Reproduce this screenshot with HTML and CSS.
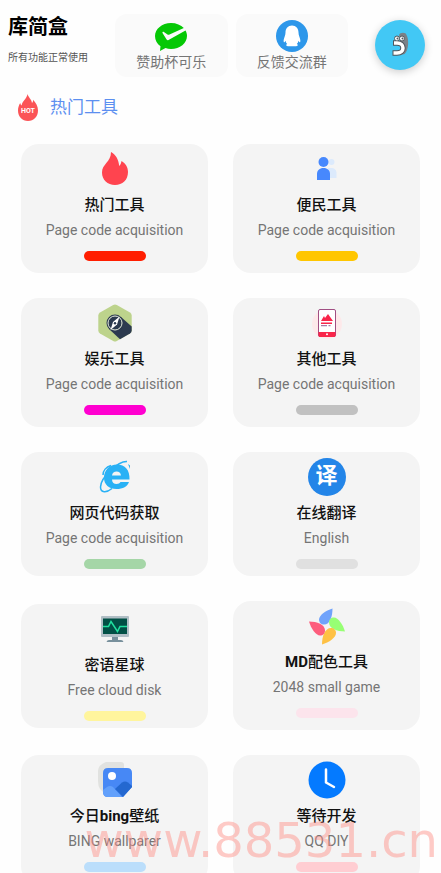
FILE: index.html
```html
<!DOCTYPE html>
<html lang="zh">
<head>
  <meta charset="UTF-8">
  <meta name="viewport" content="width=device-width, initial-scale=1">
  <title>库简盒</title>
  <link rel="stylesheet" href="styles.css">
</head>
<body>
  <header class="top">
    <div class="brand">
      <h1>库简盒</h1>
      <p>所有功能正常使用</p>
    </div>
    <div class="actions">
      <button type="button" class="action">
        <svg width="32" height="32" viewBox="0 0 32 32">
          <path fill="#05c805" d="M16 3C7 3 0 9 0 16c0 4 2 8 5.500 10.300L5 31l5.500-3C12.200 28.600 14 29 16 29c9 0 16-6 16-13 0-2-.5-3.800-1.500-5.500L13.500 20c-.8.400-1.500.2-1.900-.6L7.500 13c-.3-.8.700-1.500 1.400-1l3.600 2.600c.5.300 1 .3 1.500.1L28.800 8C26 5 21.400 3 16 3z"/>
        </svg>
        <span>赞助杯可乐</span>
      </button>
      <button type="button" class="action">
        <svg width="32" height="32" viewBox="0 0 32 32">
          <circle cx="16" cy="16" r="16" fill="#2d97ea"/>
          <path fill="#fff" d="M16 5.500c-4 0-6.500 3-6.500 7 0 1.500-.3 2.500-.8 4-.9 2.200-1.400 4.500-.9 5.600.5.600 1.300-.3 1.700-1.400.3 1.400.9 2.500 1.700 3.400-1.500.6-1.500 2.100.6 2.100h8.400c2.100 0 2.100-1.500.6-2.100.8-.9 1.400-2 1.700-3.400.4 1.100 1.200 2 1.700 1.400.5-1.100 0-3.400-.9-5.600-.5-1.500-.8-2.500-.8-4 0-4-2.500-7-6.500-7z"/>
        </svg>
        <span>反馈交流群</span>
      </button>
    </div>
    <button type="button" class="ball" aria-label="菜单">
      <svg width="18" height="26" viewBox="0 0 18 26">
        <path fill="#7b8187" d="M8 3c1-3 7-3 7.500 0 2.500 4 2.500 15-2 19l-4 1V8z"/>
        <path fill="none" stroke="#50565c" stroke-width="5.500" d="M1.500 21H6c8 0 8-10 0-10H2"/>
        <circle cx="6" cy="6.500" r="2.500" fill="#fff" stroke="#50565c"/>
        <circle cx="11" cy="6.500" r="2.500" fill="#fff" stroke="#50565c"/>
        <path fill="none" stroke="#fff" stroke-width="3.500" d="M2.500 21H6c8 0 8-10 0-10H3"/>
        <circle cx="6.500" cy="6.500" r="1" fill="#50565c"/>
        <circle cx="11.500" cy="6.500" r="1" fill="#50565c"/>
      </svg>
    </button>
  </header>

  <main>
    <h2 class="section">
      <svg width="20" height="27" viewBox="0 0 20 27">
        <path fill="#fb5457" d="M9.500 0c.5 3 4 5 4.500 9 .9-.8 1.200-2 1.100-3.200C18 9 20 12.500 20 16.500 20 22.500 15.800 27 10 27S0 22.500 0 16.500c0-3 1-5.500 2.200-7.500.2 1.200.7 2 1.500 2.500C4 7 8.800 5 9.500 0z"/>
        <text x="10" y="19" class="hot">HOT</text>
      </svg>
      热门工具
    </h2>

    <div class="grid">
      <a class="card" href="#">
        <div class="icon">
          <svg width="38" height="38" viewBox="0 0 38 38">
            <path fill="#ff444f" d="M15 2c4.500 2.500 7.600 7 8.200 14 1.300-1 1.900-2.700 2.300-5C29.500 13.500 32 17 32 22c0 8-5.500 13-13 13S6 30 6 22.500C6 14 15 12 15 2z"/>
          </svg>
        </div>
        <h3>热门工具</h3>
        <p>Page code acquisition</p>
        <i class="bar red"></i>
      </a>
      <a class="card" href="#">
        <div class="icon">
          <svg width="38" height="38" viewBox="0 0 38 38">
            <circle cx="23.500" cy="12" r="3" fill="#dceafc"/>
            <path fill="#dceafc" d="M20 18h3c3.500 0 5.500 2 5.500 5v5H20z"/>
            <circle cx="15.500" cy="12" r="5" fill="#4788fd"/>
            <path fill="#4788fd" d="M9 30v-6c0-3.500 2.500-6 6.500-6s6.500 2.500 6.500 6v6z"/>
          </svg>
        </div>
        <h3>便民工具</h3>
        <p>Page code acquisition</p>
        <i class="bar amber"></i>
      </a>
      <a class="card" href="#">
        <div class="icon">
          <svg width="38" height="38" viewBox="0 0 38 38">
            <path fill="#bdd38c" d="M17.200 1q1.800-1 3.600 0L34 8.500q1.700 1 1.700 3v15q0 2-1.700 3L20.800 37q-1.800 1-3.600 0L4 29.500q-1.700-1-1.700-3v-15q0-2 1.700-3z"/>
            <path fill="#2c3a4f" d="M25 13l10.700 9.500v4q0 2-1.700 3L24 35.200 13 25z"/>
            <circle cx="19" cy="19" r="8.500" fill="#2c3a4f" />
            <circle cx="19" cy="19" r="7" fill="none" stroke="#e8eedd"/>
            <path fill="#fff" d="M23.500 12.500l-2.500 8-6.500 5.500 2.500-8z"/>
            <circle cx="19" cy="19.200" r="1.200" fill="#2c3a4f"/>
          </svg>
        </div>
        <h3>娱乐工具</h3>
        <p>Page code acquisition</p>
        <i class="bar magenta"></i>
      </a>
      <a class="card" href="#">
        <div class="icon">
          <svg width="38" height="38" viewBox="0 0 38 38">
            <circle cx="19" cy="20" r="15" fill="#fde9ea"/>
            <rect x="10.500" y="5.500" width="17" height="27" rx="1.500" fill="#fff" stroke="#a04f83"/>
            <path fill="#f9254a" d="M10.500 28h17v3.500q0 1.500-1.500 1.500H12q-1.500 0-1.500-1.500zM13 17l3-5 1 2 3-4 5 7zM13 18.500h11v1.500H13z"/>
            <path fill="#a77ba6" d="M13 21h6v1.200h-6zM20.500 21h2v1.200h-2z"/>
            <circle cx="19" cy="30.300" r="1" fill="#fff"/>
          </svg>
        </div>
        <h3>其他工具</h3>
        <p>Page code acquisition</p>
        <i class="bar grey"></i>
      </a>
      <a class="card short" href="#">
        <div class="icon">
          <svg width="38" height="38" viewBox="0 0 38 38">
            <path fill="#29b1f5" fill-rule="evenodd" d="M33.500 21.500H16c0 3 2 4.500 4.500 4.500 2 0 3.300-.8 4-2h8.500C31.500 28.500 27 31 20.500 31 13 31 8 26.500 8 20 8 12 13.500 6.500 21 6.500c8 0 13 5.500 12.500 15zM16 17.500h9c-.2-2.500-2-4-4.400-4-2.500 0-4.300 1.500-4.600 4z"/>
            <path fill="none" stroke="#29b1f5" stroke-width="1.500" d="M31 3.500C22 3 5 19 4.500 29c0 6 6 6 11.500 1.500M7 17c0-4 3-8 8-9.500"/>
            <path fill="#29b1f5" d="M32 6l2 1.500V11z"/>
          </svg>
        </div>
        <h3>网页代码获取</h3>
        <p>Page code acquisition</p>
        <i class="bar green"></i>
      </a>
      <a class="card short" href="#">
        <div class="icon"><span class="translate">译</span></div>
        <h3>在线翻译</h3>
        <p>English</p>
        <i class="bar silver"></i>
      </a>
      <a class="card short" href="#">
        <div class="icon">
          <svg width="38" height="38" viewBox="0 0 38 38">
            <path fill="#78909c" d="M16 26h6v4h3q2 0 2.500 2H10.500q.5-2 2.500-2h3z"/>
            <rect x="5" y="6" width="28" height="21" rx="1" fill="#b0bec5"/>
            <rect x="7" y="8.500" width="24" height="15.500" fill="#014f45"/>
            <path fill="none" stroke="#20e0a0" stroke-width="1.500" d="M7 16.500h5.500l2.500-5 6.500 10 2.500-5h7"/>
          </svg>
        </div>
        <h3>密语星球</h3>
        <p>Free cloud disk</p>
        <i class="bar yellow"></i>
      </a>
      <a class="card" href="#">
        <div class="icon">
          <svg width="38" height="38" viewBox="0 0 38 38">
            <path fill="#70a3fb" d="M24.500 1.500c-7 2-13.500 7-13.500 11 0 3 2 5 5 5 6 0 8.500-8 8.500-16z"/>
            <path fill="#97ff74" d="M37 24.500c-2-7-7-14-11-14-3 0-5 2-5 5 0 6 8 9 16 9z"/>
            <path fill="#fec144" d="M14 37.500c7-2 14-7 14-11.500 0-3-2-5-5-5-6 0-9 8-9 16.500z"/>
            <path fill="#fd5d7d" d="M1 14.500c2 7 7 14 11 14 3 0 5-2 5-5 0-6-8-9-16-9z"/>
          </svg>
        </div>
        <h3><b>MD</b>配色工具</h3>
        <p>2048 small game</p>
        <i class="bar rose"></i>
      </a>
      <a class="card" href="#">
        <div class="icon">
          <svg width="38" height="38" viewBox="0 0 38 38">
            <path fill="#e1e2e0" d="M10 1h15q3 0 3 3v28H10Q2 30 2 20V10q0-6 8-9z"/>
            <clipPath id="photo"><path d="M12 7h19q5 0 5 5v14l-9 10H12q-5 0-5-5V12q0-5 5-5z"/></clipPath>
            <g clip-path="url(#photo)">
              <path fill="#4788f5" d="M7 7h29v29H7z"/>
              <path fill="#62a0fb" d="M7 29l4-3q3-2 6 0l9 10H7z"/>
              <path fill="#2468d0" d="M19 28l7-6.500q3-2 6 0l4 3.500v11h-9z"/>
            </g>
            <circle cx="16" cy="15" r="4" fill="#fff"/>
          </svg>
        </div>
        <h3>今日<b>bing</b>壁纸</h3>
        <p>BING wallparer</p>
        <i class="bar sky"></i>
      </a>
      <a class="card" href="#">
        <div class="icon">
          <svg width="38" height="38" viewBox="0 0 38 38">
            <circle cx="19" cy="19" r="18.500" fill="#047aff"/>
            <path fill="none" stroke="#fff" stroke-width="2.500" stroke-linecap="round" stroke-linejoin="round" d="M18 8.500v13l8 4.500"/>
          </svg>
        </div>
        <h3>等待开发</h3>
        <p>QQ DIY</p>
        <i class="bar pink"></i>
      </a>
    </div>
  </main>
  <div class="watermark">www.88531.cn</div>
</body>
</html>
```

FILE: styles.css
```css
* {
  box-sizing: border-box;
  margin: 0;
  padding: 0;
  font-family: Roboto, "Noto Sans CJK SC", sans-serif;
}
body {
  background: #fefefe;
}
svg {
  display: block;
}
.top {
  display: flex;
  align-items: flex-start;
  padding: 14px 16px 0 8px;
}
.brand {
  width: 107px;
}
.brand h1 {
  font-size: 20px;
  line-height: 26px;
  color: #000;
}
.brand p {
  margin-top: 12px;
  font-size: 10px;
  line-height: 12px;
  color: #555;
}
.actions {
  flex: 1;
  display: flex;
  gap: 8px;
}
.action {
  flex: 1;
  display: flex;
  flex-direction: column;
  align-items: center;
  height: 63px;
  padding-top: 6px;
  border: none;
  border-radius: 12px;
  background: #fafafa;
  color: #757575;
  font-size: 14px;
  line-height: 20px;
  cursor: pointer;
}
.ball {
  display: flex;
  align-items: center;
  justify-content: center;
  width: 50px;
  height: 50px;
  margin: 6px 0 0 27px;
  border: none;
  border-radius: 50%;
  background: #42c8f5;
  box-shadow: 0 2px 8px rgba(0, 0, 0, .2);
  cursor: pointer;
}
.section {
  display: flex;
  align-items: center;
  gap: 12px;
  padding: 16px 18px 0;
  font-size: 17px;
  line-height: 28px;
  font-weight: 400;
  color: #5c8ff0;
}
.hot {
  font-size: 7px;
  font-weight: 700;
  fill: #fff;
  text-anchor: middle;
}
.grid {
  display: grid;
  grid-template-columns: 1fr 1fr;
  gap: 25px;
  align-items: center;
  padding: 23px 21px;
}
.card {
  display: flex;
  flex-direction: column;
  align-items: center;
  padding: 6px 6px 12px;
  border-radius: 18px;
  background: #f4f4f4;
  text-decoration: none;
}
.card.short {
  padding-bottom: 7px;
}
.icon {
  height: 38px;
}
.card h3 {
  font-size: 15px;
  line-height: 34px;
  font-weight: 500;
  color: #111;
}
.card p {
  font-size: 14px;
  line-height: 16px;
  color: #757575;
}
.translate {
  display: block;
  width: 38px;
  height: 38px;
  border-radius: 50%;
  background: #2385e8;
  color: #fff;
  font-size: 22px;
  line-height: 36px;
  font-weight: 700;
  text-align: center;
}
.bar {
  width: 62px;
  height: 10px;
  margin-top: 13px;
  border-radius: 5px;
}
.red { background: #ff1e00; }
.amber { background: #ffc600; }
.magenta { background: #ff00d0; }
.grey { background: #c1c1c1; }
.green { background: #a5d6a7; }
.silver { background: #e0e0e0; }
.yellow { background: #fff59d; }
.rose { background: #fce4ec; }
.sky { background: #bbdefb; }
.pink { background: #ffcdd2; }
.watermark {
  position: fixed;
  right: 3px;
  bottom: 9px;
  font-family: "DejaVu Sans", sans-serif;
  font-size: 48px;
  line-height: 48px;
  color: rgba(255, 140, 130, .45);
  pointer-events: none;
}
```
